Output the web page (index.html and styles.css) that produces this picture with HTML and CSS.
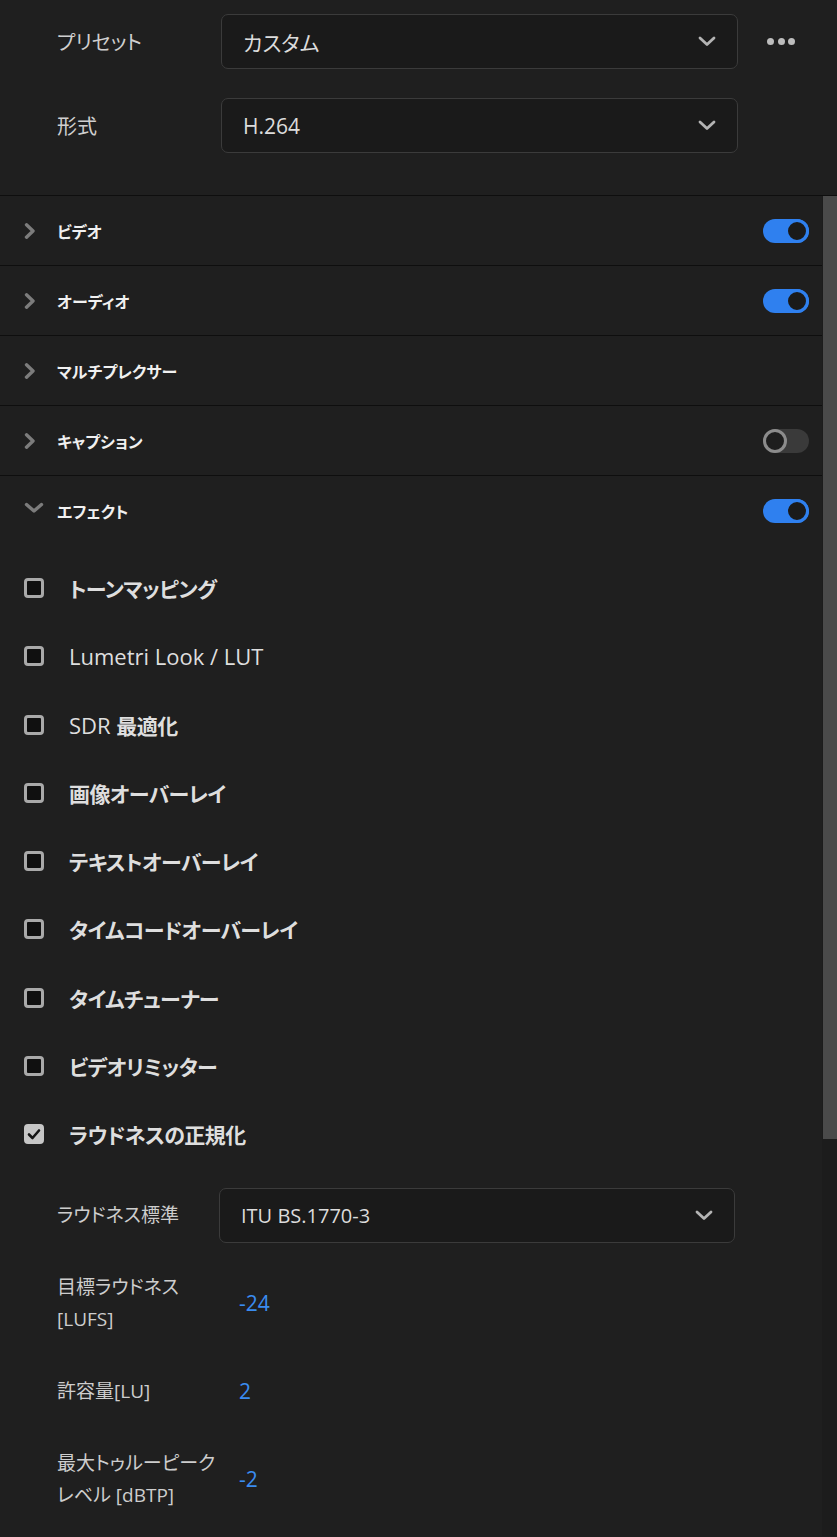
FILE: index.html
```html
<!DOCTYPE html>
<html lang="ja">
  <head>
    <meta charset="UTF-8" />
    <title>書き出し設定</title>
    <link rel="stylesheet" href="styles.css">
  </head>
  <body>
    <div class="panel">
      <div class="top">
        <div class="field">
          <span class="field-label">プリセット</span>
          <div class="select">
            <span>カスタム</span>
            <svg class="caret" width="18" height="11" viewBox="0 0 18 11"><path d="M2 2 L9 8.5 L16 2" /></svg>
          </div>
          <div class="more"><i></i><i></i><i></i></div>
        </div>
        <div class="field">
          <span class="field-label">形式</span>
          <div class="select">
            <span>H.264</span>
            <svg class="caret" width="18" height="11" viewBox="0 0 18 11"><path d="M2 2 L9 8.5 L16 2" /></svg>
          </div>
        </div>
      </div>

      <div class="body">
        <div class="content">
          <div class="section">
            <svg class="chev" width="12" height="16" viewBox="0 0 12 16"><path d="M2.5 1.8 L9 8 L2.5 14.2" /></svg>
            <span class="section-title">ビデオ</span>
            <span class="toggle on"></span>
          </div>
          <div class="section">
            <svg class="chev" width="12" height="16" viewBox="0 0 12 16"><path d="M2.5 1.8 L9 8 L2.5 14.2" /></svg>
            <span class="section-title">オーディオ</span>
            <span class="toggle on"></span>
          </div>
          <div class="section">
            <svg class="chev" width="12" height="16" viewBox="0 0 12 16"><path d="M2.5 1.8 L9 8 L2.5 14.2" /></svg>
            <span class="section-title">マルチプレクサー</span>
          </div>
          <div class="section">
            <svg class="chev" width="12" height="16" viewBox="0 0 12 16"><path d="M2.5 1.8 L9 8 L2.5 14.2" /></svg>
            <span class="section-title">キャプション</span>
            <span class="toggle"></span>
          </div>
          <div class="section open">
            <svg class="chev down" width="20" height="12" viewBox="0 0 20 12"><path d="M2.5 2.5 L10 9 L17.5 2.5" /></svg>
            <span class="section-title">エフェクト</span>
            <span class="toggle on"></span>
          </div>

          <div class="effects">
            <div class="effect"><span class="box"></span><span class="ja">トーンマッピング</span></div>
            <div class="effect"><span class="box"></span><span>Lumetri Look / LUT</span></div>
            <div class="effect"><span class="box"></span><span>SDR <span class="ja">最適化</span></span></div>
            <div class="effect"><span class="box"></span><span class="ja">画像オーバーレイ</span></div>
            <div class="effect"><span class="box"></span><span class="ja">テキストオーバーレイ</span></div>
            <div class="effect"><span class="box"></span><span class="ja">タイムコードオーバーレイ</span></div>
            <div class="effect"><span class="box"></span><span class="ja">タイムチューナー</span></div>
            <div class="effect"><span class="box"></span><span class="ja">ビデオリミッター</span></div>
            <div class="effect">
              <span class="box checked">
                <svg width="14" height="12" viewBox="0 0 14 12"><path d="M2 6.5 L5.5 10 L12 2.5" /></svg>
              </span>
              <span class="ja">ラウドネスの正規化</span>
            </div>
          </div>

          <div class="form">
            <div class="form-row">
              <span class="form-label">ラウドネス標準</span>
              <div class="select small">
                <span>ITU BS.1770-3</span>
                <svg class="caret" width="18" height="11" viewBox="0 0 18 11"><path d="M2 2 L9 8.5 L16 2" /></svg>
              </div>
            </div>
            <div class="form-row">
              <span class="form-label">目標ラウドネス<br>[LUFS]</span>
              <span class="value">-24</span>
            </div>
            <div class="form-row">
              <span class="form-label">許容量[LU]</span>
              <span class="value">2</span>
            </div>
            <div class="form-row">
              <span class="form-label">最大トゥルーピーク<br>レベル [dBTP]</span>
              <span class="value">-2</span>
            </div>
          </div>
        </div>
        <div class="scrollbar"><div class="thumb"></div></div>
      </div>
    </div>
  </body>
</html>
```

FILE: styles.css
```css
body {
  margin: 0;
  background: #1f1f1f;
  color: #d2d2d2;
  font-family: "Open Sans", "Noto Sans CJK JP", sans-serif;
  font-feature-settings: "palt";
}
.panel {
  width: 837px;
  height: 1537px;
  overflow: hidden;
}

/* top: preset + format */
.top {
  height: 196px;
  box-sizing: border-box;
  padding: 14px 0 0 57px;
  border-bottom: 1px solid #0e0e0e;
  display: flex;
  flex-direction: column;
  gap: 29px;
}
.field {
  display: flex;
  align-items: center;
}
.field-label {
  width: 164px;
  font-size: 20px;
  color: #cfcfcf;
}
.select {
  width: 517px;
  height: 55px;
  box-sizing: border-box;
  background: #1a1a1a;
  border: 1.5px solid #3b3b3b;
  border-radius: 7px;
  padding: 0 21px;
  display: flex;
  align-items: center;
  justify-content: space-between;
  font-size: 21px;
  color: #dcdcdc;
}
.select.small {
  width: 516px;
  font-size: 20px;
}
.caret path {
  fill: none;
  stroke: #b4b4b4;
  stroke-width: 2.8;
  stroke-linecap: round;
  stroke-linejoin: round;
}
.more {
  margin-left: 29px;
  display: flex;
  gap: 3.5px;
}
.more i {
  width: 7px;
  height: 7px;
  border-radius: 50%;
  background: #bdbdbd;
}

/* scrolling body */
.body {
  display: flex;
  height: 1340px;
}
.content {
  flex: 1;
}
.scrollbar {
  width: 15px;
  background: #1c1c1c;
}
.thumb {
  margin-left: 1px;
  height: 943px;
  background: #4a4a4a;
}

.section {
  height: 69px;
  border-bottom: 1px solid #0e0e0e;
  display: flex;
  align-items: center;
  padding: 0 13px 0 24px;
}
.section.open {
  border-bottom: none;
}
.chev {
  flex: none;
  margin-right: 21px;
}
.chev path {
  fill: none;
  stroke: #7c7c7c;
  stroke-width: 3.4;
  stroke-linecap: round;
  stroke-linejoin: round;
}
.chev.down {
  margin: -6px 13px 0 0;
}
.section-title {
  flex: 1;
  font-size: 16px;
  font-weight: 700;
  color: #f0f0f0;
}
.toggle {
  position: relative;
  width: 46px;
  height: 24px;
  border-radius: 12px;
  background: #3a3a3a;
}
.toggle::after {
  content: "";
  position: absolute;
  left: 0;
  top: 0;
  width: 18px;
  height: 18px;
  border-radius: 50%;
  border: 3px solid #8c8c8c;
  background: #1e1e1e;
}
.toggle.on {
  background: #2f80ef;
}
.toggle.on::after {
  left: 22px;
  border-color: #2f80ef;
  background: #1a1a1a;
}

/* effects checklist */
.effects {
  padding: 9px 0 3px 24px;
}
.effect {
  height: 68.25px;
  display: flex;
  align-items: center;
  gap: 25px;
  font-size: 22px;
  color: #dedede;
}
.ja {
  font-size: 21px;
  font-weight: 700;
  letter-spacing: -0.6px;
}
.box {
  width: 20px;
  height: 20px;
  box-sizing: border-box;
  border: 3px solid #a9a9a9;
  border-radius: 4px;
  background: #101010;
  display: flex;
  align-items: center;
  justify-content: center;
}
.box.checked {
  background: #c6c6c6;
  border-color: #c6c6c6;
}
.box svg path {
  fill: none;
  stroke: #151515;
  stroke-width: 2.6;
  stroke-linecap: round;
  stroke-linejoin: round;
}

/* loudness form */
.form {
  padding-left: 57px;
}
.form-row {
  height: 88px;
  display: flex;
  align-items: center;
}
.form-label {
  width: 162px;
  font-size: 19px;
  line-height: 32px;
  color: #cdcdcd;
}
.value {
  padding-left: 20px;
  font-size: 21px;
  color: #3a8cf0;
}
```
